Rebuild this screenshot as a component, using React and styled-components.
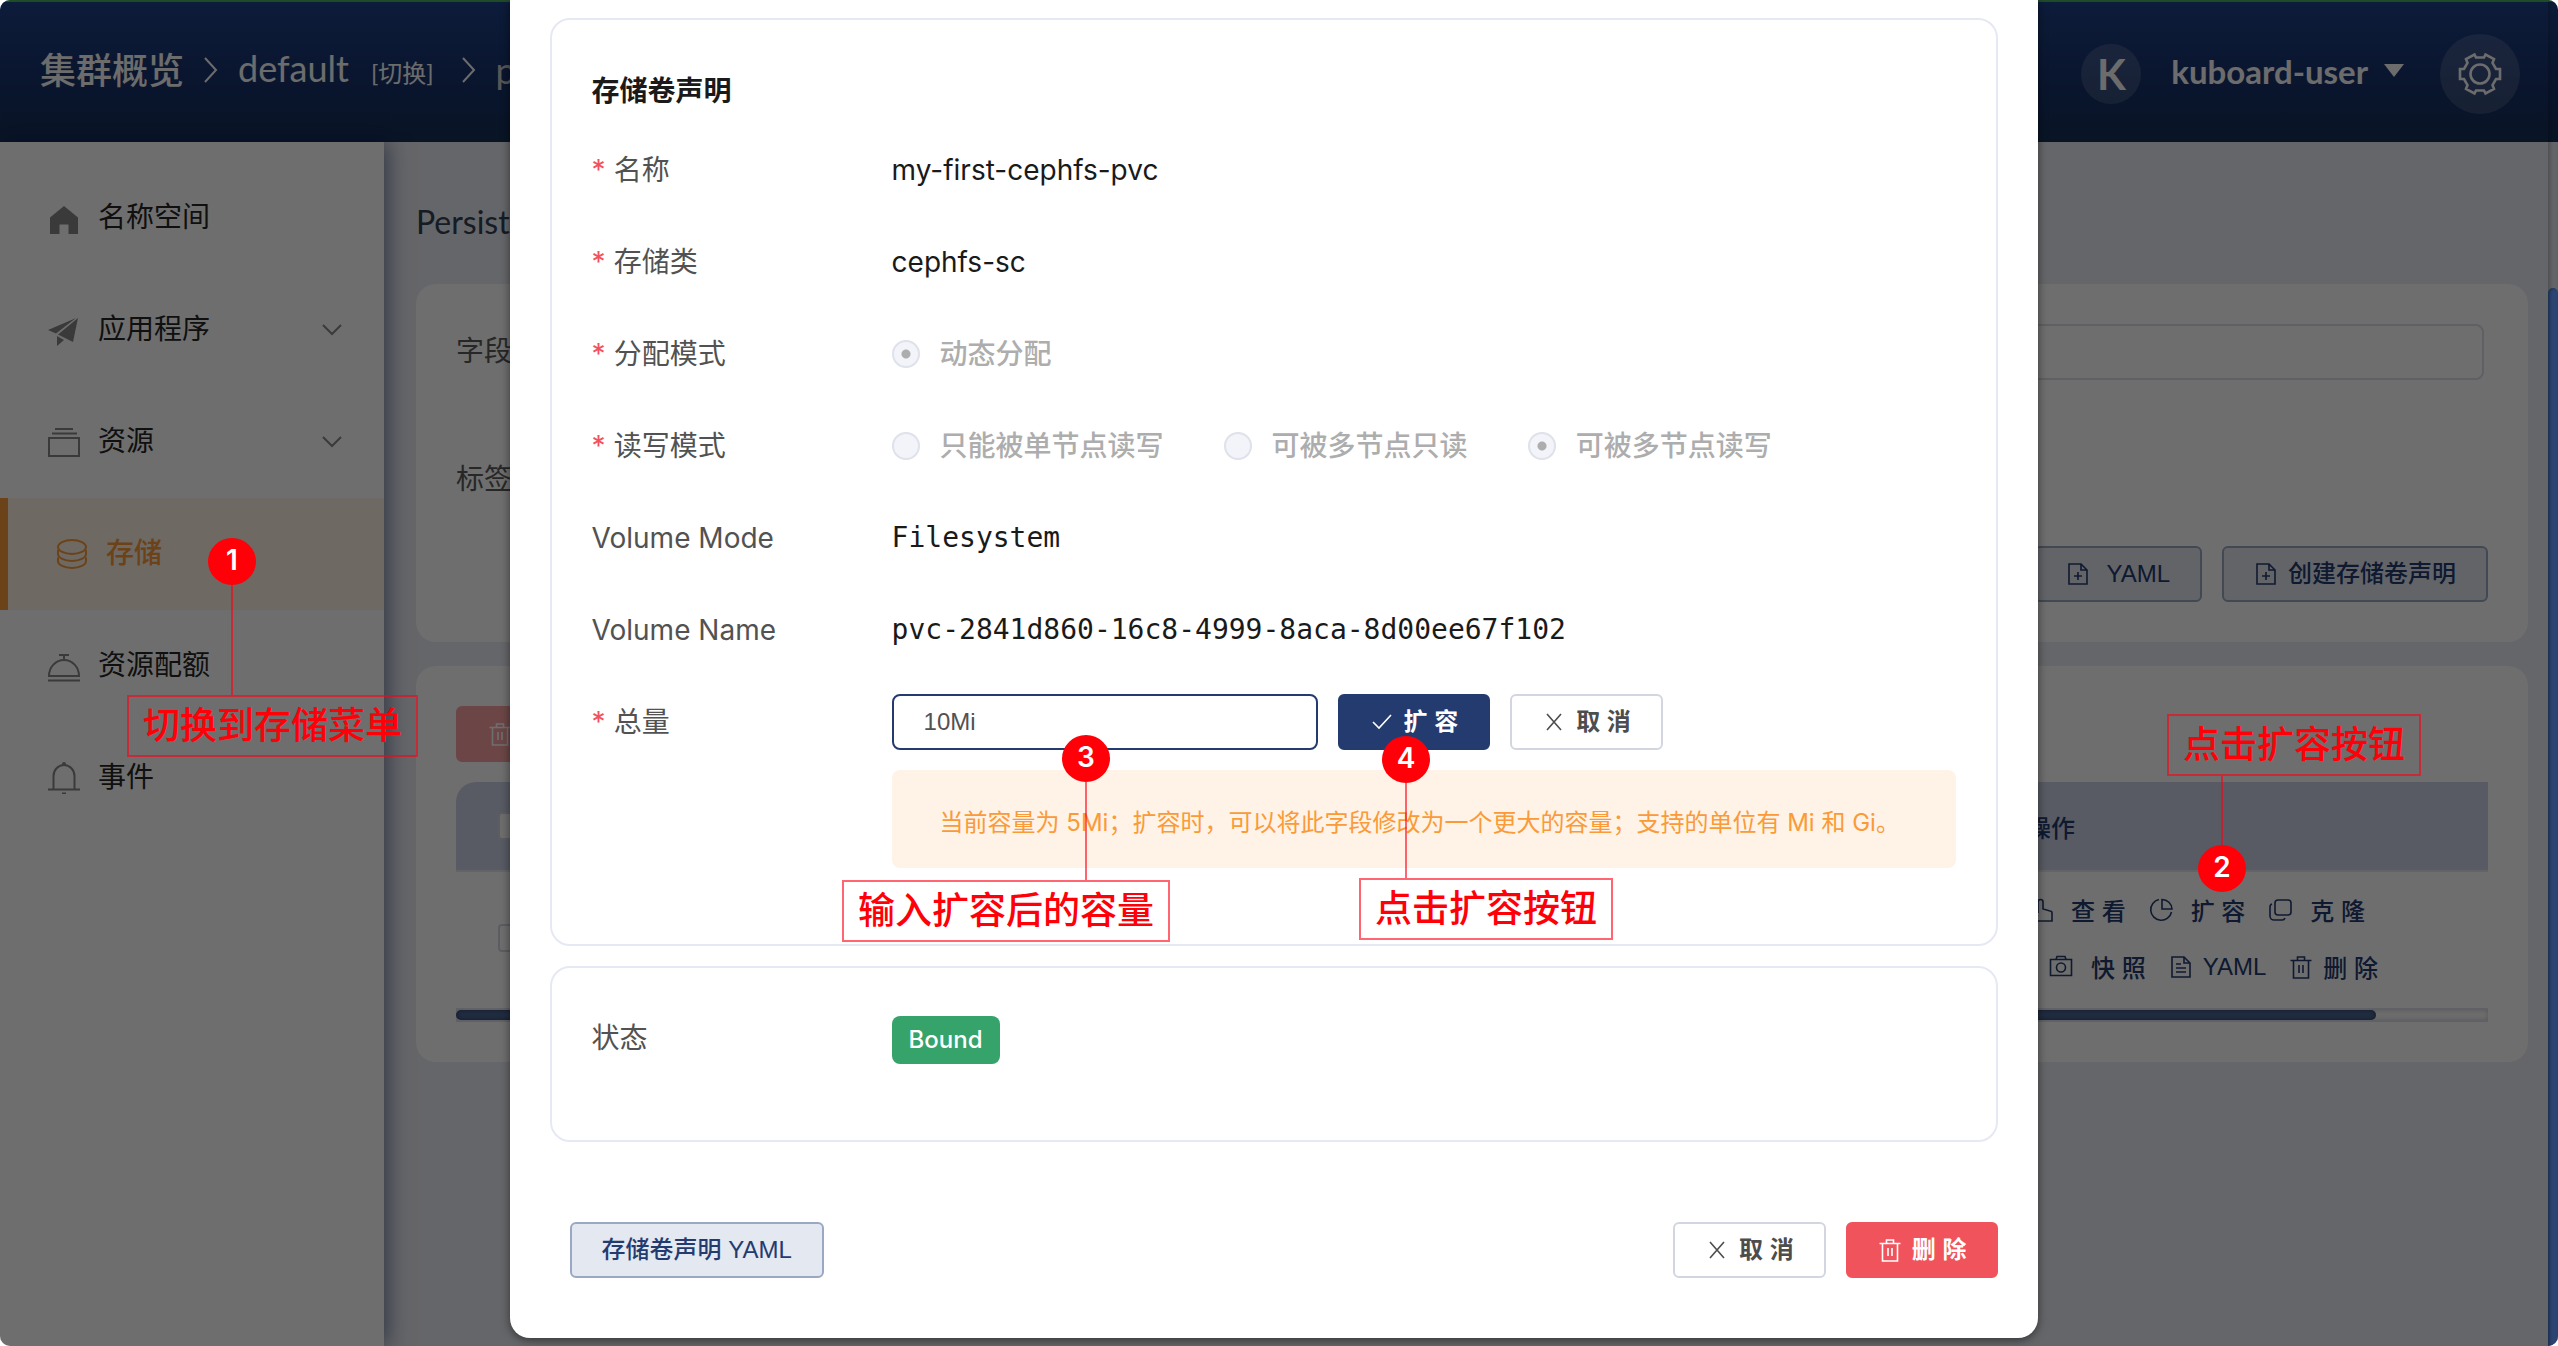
import React from "react";
import styled, { createGlobalStyle, css } from "styled-components";

const sans = '"Liberation Sans", "Noto Sans CJK SC", sans-serif';
const inter = 'Inter, "Noto Sans CJK SC", sans-serif';
const display = 'Lato, "Noto Sans CJK SC", sans-serif';
const mono = '"DejaVu Sans Mono", "Noto Sans CJK SC", monospace';

const color = {
  navy: "#243b70",
  navyTint: "#e4e8f0",
  navyLine: "#9aa8c3",
  text: "#1a1a1a",
  label: "#525252",
  muted: "#adadad",
  line: "#e6e9f4",
  danger: "#f0535b",
  orange: "#fa9a38",
  orangeTint: "#fef3e6",
  green: "#36a36b",
  mark: "#ff0008",
  markLine: "rgba(255, 0, 20, 0.6)",
};

const GlobalStyle = createGlobalStyle`
  *, *::before, *::after { box-sizing: border-box; }
  body { margin: 0; background: #fff; font-family: ${sans}; }
  button, input { font: inherit; }
`;

const Shell = styled.div`
  position: relative;
  display: flex;
  flex-direction: column;
  min-height: 100vh;
  overflow: hidden;
  border-radius: 10px;
  background: #eaecf3;
`;

/* ---------- header ---------- */

const Header = styled.header`
  display: flex;
  align-items: center;
  justify-content: space-between;
  height: 142px;
  padding: 4px 38px 0 40px;
  border-top: 2px solid #48ae5e;
  background: linear-gradient(#1e4188, #18326a 60%, #152f56);
  color: #fafafa;
  font-family: ${display};
`;

const Crumbs = styled.nav`
  display: flex;
  align-items: center;
  gap: 20px;
  margin-bottom: 8px;
  font-size: 36px;
  line-height: 48px;
`;

const CrumbLink = styled.a`
  color: ${(p) => (p.$dim ? "#cfc8c8" : "inherit")};
  font-size: ${(p) => (p.$small ? "24px" : "36px")};
  font-weight: ${(p) => (p.$strong ? 500 : 400)};
  text-decoration: none;
  white-space: nowrap;
`;

const CrumbGroup = styled.span`
  display: flex;
  align-items: baseline;
  gap: 22px;
  padding-right: 8px;
`;

const Account = styled.div`
  display: flex;
  align-items: center;
`;

const Avatar = styled.span`
  display: grid;
  place-items: center;
  width: 60px;
  height: 60px;
  border-radius: 50%;
  background: rgba(255, 255, 255, 0.14);
  font-size: 42px;
  font-weight: 700;
  line-height: 56px;
`;

const UserButton = styled.button`
  display: flex;
  align-items: center;
  gap: 16px;
  margin: 0 36px 0 30px;
  padding: 0 0 6px;
  border: 0;
  background: none;
  color: inherit;
  font-size: 33px;
  font-weight: 700;
`;

const RoundButton = styled.button`
  display: grid;
  place-items: center;
  width: 80px;
  height: 80px;
  padding: 0;
  border: 0;
  border-radius: 50%;
  background: rgba(255, 255, 255, 0.14);
  color: inherit;
`;

/* ---------- sidebar ---------- */

const Body = styled.div`
  display: flex;
  flex: 1;
`;

const Sidebar = styled.nav`
  z-index: 1;
  flex: 0 0 384px;
  padding-top: 20px;
  background: #fff;
  box-shadow: 4px 0 20px rgba(0, 28, 80, 0.5);
`;

const NavItem = styled.a`
  display: flex;
  align-items: center;
  gap: 18px;
  height: 112px;
  padding: 0 42px 0 48px;
  color: #262626;
  font-size: 28px;
  line-height: 40px;
  text-decoration: none;

  svg { color: #888; }

  ${(p) =>
    p.$active &&
    css`
      border-left: 8px solid ${color.orange};
      background: ${color.orangeTint};
      color: ${color.orange};
      font-weight: 500;
      svg { color: ${color.orange}; }
    `}
`;

const NavText = styled.span`
  flex: 1;
`;

/* ---------- page content ---------- */

const Main = styled.main`
  flex: 1;
  min-width: 0;
  padding: 60px 30px 40px 32px;
`;

const PageTitle = styled.h1`
  margin: 0 0 42px;
  color: #344254;
  font-family: ${display};
  font-size: 32px;
  font-weight: 400;
  line-height: 40px;
`;

const Card = styled.section`
  display: flex;
  flex-direction: column;
  margin-bottom: 24px;
  padding: 40px;
  border-radius: 20px;
  background: #fff;
`;

const FilterRow = styled.div`
  display: flex;
  align-items: center;
  height: 56px;
  margin-bottom: ${(p) => (p.$last ? "38px" : "72px")};
  padding-right: 4px;
  color: #5c5c5c;
  font-size: 28px;
`;

const FilterLabel = styled.label`
  width: 240px;
  padding-bottom: 6px;
`;

const FilterInput = styled.input`
  flex: 1;
  height: 56px;
  border: 2px solid #dcdee8;
  border-radius: 8px;
  background: #fff;
`;

const Toolbar = styled.div`
  display: flex;
  justify-content: ${(p) => (p.$end ? "flex-end" : "flex-start")};
  gap: 20px;
`;

const tones = {
  primary: css`
    border-color: ${color.navy};
    background: ${color.navy};
    color: #fff;
  `,
  soft: css`
    border-color: ${color.navyLine};
    background: ${color.navyTint};
    color: ${color.navy};
  `,
  plain: css`
    border-color: #d3d6e1;
    background: #fff;
    color: #4d4d4d;
  `,
  danger: css`
    border-color: ${color.danger};
    background: ${color.danger};
    color: #fff;
  `,
  dangerOff: css`
    border-color: #fba2a6;
    background: #fba2a6;
    color: #fff;
  `,
};

const Button = styled.button`
  display: inline-flex;
  align-items: center;
  justify-content: center;
  gap: ${(p) => (p.$wide ? "16px" : "10px")};
  height: 56px;
  padding: 0 30px;
  border: 2px solid;
  border-radius: 6px;
  font-size: 24px;
  font-weight: ${(p) => (p.$strong ? 700 : 500)};
  line-height: 32px;
  white-space: nowrap;
  ${(p) => tones[p.$tone]}
`;

const Table = styled.table`
  width: 100%;
  margin-top: 20px;
  border-collapse: separate;
  border-spacing: 0;
  table-layout: fixed;
`;

const Th = styled.th`
  height: 90px;
  width: ${(p) => p.$width || "auto"};
  padding: 0 20px;
  border-bottom: 2px solid #e4e7f0;
  border-top-left-radius: ${(p) => (p.$first ? "20px" : "0")};
  background: #ccd4e5;
  color: ${color.navy};
  font-size: 24px;
  font-weight: 500;
  text-align: left;
`;

const Td = styled.td`
  padding: 9px 20px 13px;
`;

const Check = styled.input`
  display: block;
  width: 28px;
  height: 28px;
  margin: 0 0 0 22px;
  appearance: none;
  border: 2px solid #d5d8e4;
  border-radius: 4px;
  background: #fff;
`;

const ActionLine = styled.div`
  display: flex;
  gap: 23px;
  height: 57px;
  padding-left: ${(p) => (p.$indent ? "22px" : "2px")};
`;

const ActionButton = styled.button`
  display: flex;
  align-items: center;
  gap: ${(p) => (p.$wide ? "18px" : "10px")};
  padding: 0;
  border: 0;
  background: none;
  color: ${color.navy};
  font-size: 24px;
  font-weight: 500;
  white-space: nowrap;
`;

const TableScroll = styled.div`
  height: 14px;
  border: solid #dfe1ec;
  border-width: 2px 0;
  background: #fcfcfd;
  box-shadow: inset 0 0 5px rgba(0, 0, 0, 0.2);
`;

const TableScrollThumb = styled.div`
  width: 94.5%;
  height: 10px;
  border-radius: 5px;
  background: #4a6594;
  box-shadow: inset 0 0 4px rgba(0, 0, 0, 0.4);
`;

/* ---------- dialog ---------- */

const Mask = styled.div`
  position: absolute;
  inset: 0;
  z-index: 2;
  display: flex;
  background: rgba(0, 0, 0, 0.57);
`;

const DialogArea = styled.div`
  display: flex;
  flex: 1;
  align-items: flex-start;
  justify-content: center;
`;

const Rail = styled.div`
  flex: 0 0 10px;
  padding-top: 288px;
  box-shadow: inset 2px 0 4px rgba(0, 0, 0, 0.25);
`;

const RailThumb = styled.div`
  height: 100%;
  border-radius: 5px 5px 0 0;
  background: #2c4472;
  box-shadow: inset 2px 0 3px rgba(0, 0, 0, 0.3);
`;

const Dialog = styled.div`
  width: 60%;
  padding: 18px 40px 60px;
  border-radius: 0 0 20px 20px;
  background: #fff;
  box-shadow: 0 2px 10px rgba(0, 0, 0, 0.5);
`;

const Panel = styled.section`
  margin-bottom: 20px;
  padding: 42px 40px 74px;
  border: 2px solid ${color.line};
  border-radius: 20px;
`;

const PanelTitle = styled.h2`
  margin: 0 0 20px;
  color: ${color.text};
  font-size: 28px;
  font-weight: 700;
  line-height: 60px;
`;

const Fields = styled.div`
  display: grid;
  grid-template-columns: 300px minmax(0, 1fr);
  row-gap: 36px;
  font-family: ${inter};
  font-size: 28px;
  line-height: 56px;
`;

const FieldLabel = styled.div`
  color: ${color.label};

  &::before {
    content: ${(p) => (p.$required ? '"*"' : "none")};
    margin-right: 8px;
    color: ${color.danger};
  }
`;

const FieldValue = styled.div`
  color: ${color.text};
  font-family: ${(p) => (p.$mono ? mono : inter)};
`;

const RadioGroup = styled.div`
  display: flex;
  gap: 60px;
`;

const RadioLabel = styled.label`
  display: flex;
  align-items: center;
  gap: 20px;
  color: ${color.muted};
  font-weight: 500;
`;

const Radio = styled.input`
  width: 28px;
  height: 28px;
  margin: 0;
  appearance: none;
  border: 2px solid #dfe1eb;
  border-radius: 50%;
  background: #f2f4fa;

  &:checked {
    background: radial-gradient(${color.muted} 4px, #f2f4fa 5px);
  }
`;

const SizeRow = styled.div`
  display: flex;
  gap: 20px;
  font-family: ${sans};
`;

const SizeInput = styled.input`
  width: 40%;
  height: 56px;
  padding: 0 30px;
  border: 2px solid ${color.navy};
  border-radius: 8px;
  outline: 0;
  background: #fff;
  color: ${color.label};
  font-size: 24px;
`;

const Hint = styled.p`
  margin: 20px 0 2px;
  padding: 33px 48px 25px;
  border-radius: 8px;
  background: ${color.orangeTint};
  color: ${color.orange};
  font-size: 24px;
  line-height: 40px;
`;

const Tag = styled.span`
  display: inline-flex;
  align-items: center;
  height: 48px;
  padding: 0 17px;
  border-radius: 8px;
  background: ${color.green};
  color: #fff;
  font-size: 24px;
  font-weight: 500;
  vertical-align: middle;
`;

const Footer = styled.footer`
  display: flex;
  justify-content: space-between;
  margin-top: 80px;
  padding-left: 20px;
`;

/* ---------- step callouts ---------- */

const Callout = styled.div`
  position: absolute;
  z-index: 3;
  top: ${(p) => p.$top}px;
  left: ${(p) => p.$left}px;
  display: flex;
  flex-direction: ${(p) => (p.$below ? "column-reverse" : "column")};
  align-items: flex-start;
`;

const Pin = styled.span`
  width: 48px;
  height: 47px;
  margin-left: ${(p) => p.$shift}px;
  border-radius: 50%;
  background: ${color.mark};
  color: #fff;
  font-family: Inter, sans-serif;
  font-size: 28px;
  font-weight: 600;
  line-height: 44px;
  text-align: center;
`;

const Stem = styled.span`
  width: 2px;
  height: ${(p) => p.$length}px;
  margin-left: ${(p) => p.$shift + 23}px;
  background: ${color.markLine};
`;

const Note = styled.span`
  padding: 2px 14px 0;
  border: 2px solid ${color.markLine};
  color: ${color.mark};
  font-size: 37px;
  font-weight: 500;
  line-height: 56px;
  white-space: nowrap;
`;

/* ---------- icons ---------- */

function Icon({ size = 24, box = 24, stroke = 1.6, children }) {
  return (
    <svg
      width={size}
      height={size}
      viewBox={`0 0 ${box} ${box}`}
      fill="none"
      stroke="currentColor"
      strokeWidth={stroke}
      aria-hidden="true"
    >
      {children}
    </svg>
  );
}

const NavIcon = ({ children }) => <Icon size={32} box={32} stroke={2}>{children}</Icon>;

const HomeIcon = () => (
  <NavIcon><path fill="currentColor" stroke="none" d="M16 4 30 15.500V32H20.500V22.500h-9V32H2V15.500z" /></NavIcon>
);
const PlaneIcon = () => (
  <NavIcon>
    <path fill="currentColor" stroke="none" d="M0 16 28 4 8 19.500zM30 4 25 28 10 20.500zM9 22l7 4-7 6z" />
  </NavIcon>
);
const StackIcon = () => <NavIcon><path d="M7 3h18M4 7.500h25M1 12h30v18H1z" /></NavIcon>;
const CoinsIcon = () => (
  <NavIcon>
    <ellipse cx="16" cy="9" rx="14" ry="7" />
    <path d="M2 12v4a14 7 0 0 0 28 0v-4M2 19.500V23a14 7 0 0 0 28 0v-3.500" />
  </NavIcon>
);
const DomeIcon = () => <NavIcon><path d="M11 5h10M16 5v4M1 26a15 16 0 0 1 30 0zM0 30.500h32" /></NavIcon>;
const BellIcon = () => (
  <NavIcon>
    <path d="M5.500 27.500V14a10.500 11 0 0 1 21 0v13.500M0 27.500h32M14 31.500h4" />
    <circle cx="16" cy="2" r="1" />
  </NavIcon>
);

const ChevronRight = () => (
  <svg width="14" height="26" viewBox="0 0 14 26" fill="none" stroke="currentColor" strokeWidth="2" aria-hidden="true">
    <path d="m1 1 11 12L1 25" />
  </svg>
);
const ChevronDown = () => (
  <svg width="20" height="12" viewBox="0 0 20 12" fill="none" stroke="currentColor" strokeWidth="2" aria-hidden="true">
    <path d="m1 1 9 9 9-9" />
  </svg>
);
const Caret = () => (
  <svg width="20" height="14" viewBox="0 0 20 14" fill="currentColor" aria-hidden="true">
    <path d="M0 0h20L10 13z" />
  </svg>
);
const GearIcon = () => (
  <Icon size={44} box={44} stroke={2.6}>
    <path d="M16.500 2.500 18 5.500h8l1.500-3 8.500 4.500-1.500 4 3.500 6h4v10h-4l-3.500 6 1.500 4-8.500 4.500-1.500-3h-8l-1.500 3L8 37l1.500-4L6 27H2V17h4l3.500-6L8 7z" />
    <circle cx="22" cy="22" r="9.500" />
  </Icon>
);
const CheckIcon = () => <Icon><path d="m3 12 6 6L21 5" /></Icon>;
const CloseIcon = () => <Icon><path d="m5 4 14 16M19 4 5 20" /></Icon>;
const TrashIcon = () => (
  <Icon><path d="M1.500 5.500h21M4.500 5.500v17.500h15V5.500M8.500 5V2h7v3M10 10v8M14 10v8" /></Icon>
);
const FilePlusIcon = () => (
  <Icon><path d="M3 2h12l6 6v14H3zM15 2v6h6M12 10v8M8 14h8" /></Icon>
);
const FileIcon = () => (
  <Icon><path d="M3 2h12l6 6v14H3zM15 2v6h6M7 9h5M7 13h10M7 17h10" /></Icon>
);
const PointerIcon = () => (
  <Icon><path d="M9 15V4a2 2 0 0 1 5 0v7l7 2a2 2 0 0 1 2 2v8H7l-5-8 2-1 5 4" /></Icon>
);
const PieIcon = () => (
  <Icon><path d="M10 1.500A10.500 10.500 0 1 0 22.500 14M13 1.500V11h10A10 10 0 0 0 13 1.500z" /></Icon>
);
const CopyIcon = () => (
  <Icon>
    <rect x="7" y="2" width="16" height="15" rx="3" />
    <path d="M4 6a3 3 0 0 0-2 3v9a4 4 0 0 0 4 4h8a3 3 0 0 0 3-2" />
  </Icon>
);
const CameraIcon = () => (
  <Icon>
    <path d="M1.500 4.500h21v16h-21zM7 4.500 8 1.500h8l1 3" />
    <circle cx="12" cy="12.500" r="4.500" />
  </Icon>
);

/* ---------- data ---------- */

const navItems = [
  { text: "名称空间", icon: HomeIcon },
  { text: "应用程序", icon: PlaneIcon, group: true },
  { text: "资源", icon: StackIcon, group: true },
  { text: "存储", icon: CoinsIcon, active: true },
  { text: "资源配额", icon: DomeIcon },
  { text: "事件", icon: BellIcon },
];

const accessModes = ["只能被单节点读写", "可被多节点只读", "可被多节点读写"];

const callouts = [
  { n: 1, text: "切换到存储菜单", top: 538, left: 127, shift: 81, stem: 110 },
  { n: 2, text: "点击扩容按钮", top: 714, left: 2167, shift: 31, stem: 69, below: true },
  { n: 3, text: "输入扩容后的容量", top: 735, left: 842, shift: 220, stem: 98 },
  { n: 4, text: "点击扩容按钮", top: 736, left: 1359, shift: 23, stem: 95 },
];

export default function App() {
  return (
    <Shell>
      <GlobalStyle />
      <Header>
        <Crumbs aria-label="breadcrumb">
          <CrumbLink href="#cluster" $strong>集群概览</CrumbLink>
          <ChevronRight />
          <CrumbGroup>
            <CrumbLink href="#default">default</CrumbLink>
            <CrumbLink href="#switch" $small>[切换]</CrumbLink>
          </CrumbGroup>
          <ChevronRight />
          <CrumbLink href="#pvc" $dim>pvc</CrumbLink>
        </Crumbs>
        <Account>
          <Avatar>K</Avatar>
          <UserButton type="button">kuboard-user <Caret /></UserButton>
          <RoundButton type="button" aria-label="设置"><GearIcon /></RoundButton>
        </Account>
      </Header>

      <Body>
        <Sidebar>
          {navItems.map(({ text, icon: Glyph, group, active }) => (
            <NavItem key={text} href={`#${text}`} $active={active}>
              <Glyph />
              <NavText>{text}</NavText>
              {group && <ChevronDown />}
            </NavItem>
          ))}
        </Sidebar>

        <Main>
          <PageTitle>PersistentVolumeClaim</PageTitle>
          <Card>
            <FilterRow>
              <FilterLabel htmlFor="field-filter">字段选择</FilterLabel>
              <FilterInput id="field-filter" />
            </FilterRow>
            <FilterRow $last>
              <FilterLabel as="span">标签选择</FilterLabel>
            </FilterRow>
            <Toolbar $end>
              <Button type="button" $tone="soft" $wide><FilePlusIcon />YAML</Button>
              <Button type="button" $tone="soft"><FilePlusIcon />创建存储卷声明</Button>
            </Toolbar>
          </Card>

          <Card>
            <Toolbar>
              <Button type="button" $tone="dangerOff"><TrashIcon />删 除</Button>
            </Toolbar>
            <Table>
              <thead>
                <tr>
                  <Th $first><Check type="checkbox" aria-label="全选" /></Th>
                  <Th $width="481px">操作</Th>
                </tr>
              </thead>
              <tbody>
                <tr>
                  <Td><Check type="checkbox" aria-label="选择" /></Td>
                  <Td>
                    <ActionLine>
                      <ActionButton type="button" $wide><PointerIcon />查 看</ActionButton>
                      <ActionButton type="button" $wide><PieIcon />扩 容</ActionButton>
                      <ActionButton type="button" $wide><CopyIcon />克 隆</ActionButton>
                    </ActionLine>
                    <ActionLine $indent>
                      <ActionButton type="button" $wide><CameraIcon />快 照</ActionButton>
                      <ActionButton type="button"><FileIcon />YAML</ActionButton>
                      <ActionButton type="button"><TrashIcon />删 除</ActionButton>
                    </ActionLine>
                  </Td>
                </tr>
              </tbody>
            </Table>
            <TableScroll><TableScrollThumb /></TableScroll>
          </Card>
        </Main>
      </Body>

      <Mask>
        <DialogArea>
          <Dialog role="dialog" aria-label="存储卷声明">
            <Panel>
              <PanelTitle>存储卷声明</PanelTitle>
              <Fields>
                <FieldLabel $required>名称</FieldLabel>
                <FieldValue>my-first-cephfs-pvc</FieldValue>
                <FieldLabel $required>存储类</FieldLabel>
                <FieldValue>cephfs-sc</FieldValue>
                <FieldLabel $required>分配模式</FieldLabel>
                <RadioGroup>
                  <RadioLabel>
                    <Radio type="radio" name="provision" defaultChecked disabled />
                    动态分配
                  </RadioLabel>
                </RadioGroup>
                <FieldLabel $required>读写模式</FieldLabel>
                <RadioGroup>
                  {accessModes.map((mode, i) => (
                    <RadioLabel key={mode}>
                      <Radio type="radio" name="access" defaultChecked={i === 2} disabled />
                      {mode}
                    </RadioLabel>
                  ))}
                </RadioGroup>
                <FieldLabel>Volume Mode</FieldLabel>
                <FieldValue $mono>Filesystem</FieldValue>
                <FieldLabel>Volume Name</FieldLabel>
                <FieldValue $mono>pvc-2841d860-16c8-4999-8aca-8d00ee67f102</FieldValue>
                <FieldLabel as="label" htmlFor="size" $required>总量</FieldLabel>
                <div>
                  <SizeRow>
                    <SizeInput id="size" defaultValue="10Mi" />
                    <Button type="button" $tone="primary" $strong><CheckIcon />扩 容</Button>
                    <Button type="button" $tone="plain" $strong><CloseIcon />取 消</Button>
                  </SizeRow>
                  <Hint>
                    当前容量为 5Mi；扩容时，可以将此字段修改为一个更大的容量；支持的单位有 Mi 和 Gi。
                  </Hint>
                </div>
              </Fields>
            </Panel>

            <Panel>
              <Fields>
                <FieldLabel>状态</FieldLabel>
                <FieldValue><Tag>Bound</Tag></FieldValue>
              </Fields>
            </Panel>

            <Footer>
              <Button type="button" $tone="soft">存储卷声明 YAML</Button>
              <Toolbar>
                <Button type="button" $tone="plain" $strong><CloseIcon />取 消</Button>
                <Button type="button" $tone="danger" $strong><TrashIcon />删 除</Button>
              </Toolbar>
            </Footer>
          </Dialog>
        </DialogArea>
        <Rail><RailThumb /></Rail>
      </Mask>

      {callouts.map((c) => (
        <Callout key={c.n} $top={c.top} $left={c.left} $below={c.below}>
          <Pin $shift={c.shift}>{c.n}</Pin>
          <Stem $shift={c.shift} $length={c.stem} />
          <Note>{c.text}</Note>
        </Callout>
      ))}
    </Shell>
  );
}
